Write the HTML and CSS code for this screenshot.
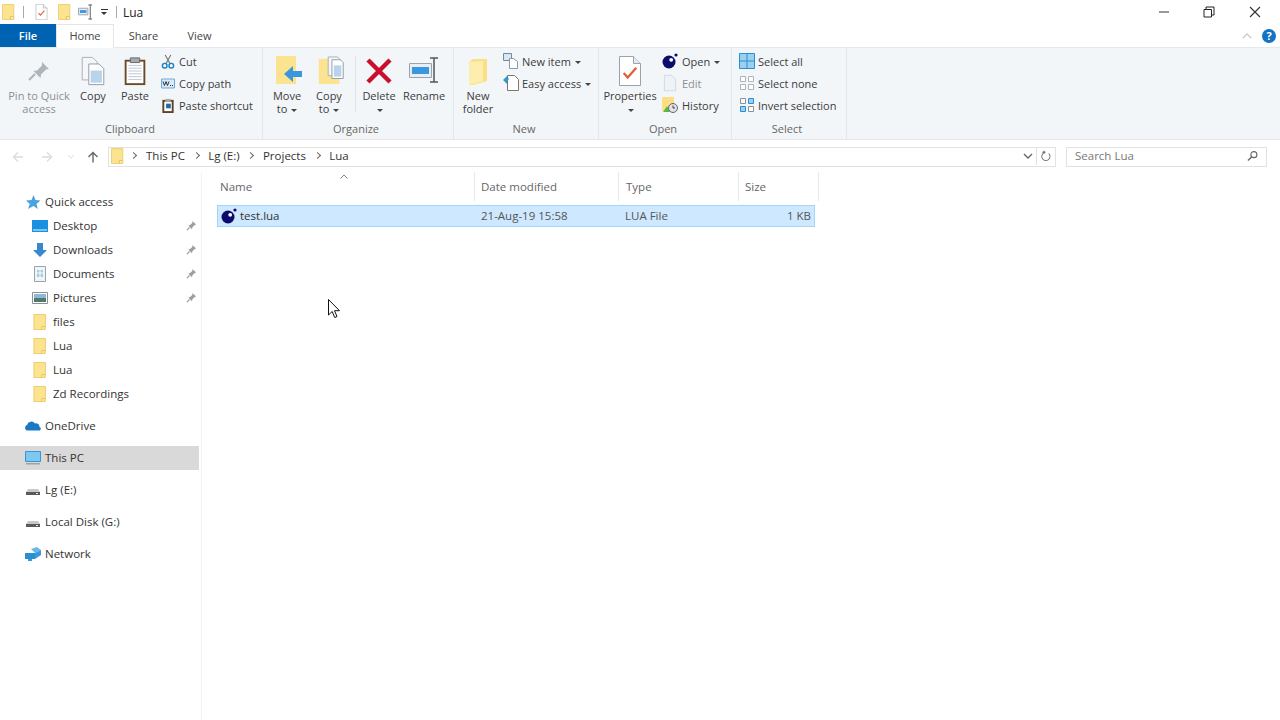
FILE: index.html
```html
<!DOCTYPE html>
<html lang="en">
<head>
<meta charset="utf-8">
<title>Lua</title>
<link rel="stylesheet" href="styles.css">
</head>
<body>
<svg class="defs" width="0" height="0">
  <defs>
    <symbol id="folder" viewBox="0 0 14 17"><path d="M.5.5h12.2v16H.5z" fill="#fbe38f" stroke="#eccd6a"/><path d="M9 16.5v-3h3.7" fill="#fff3c4" stroke="#e2be55"/></symbol>
    <symbol id="drive" viewBox="0 0 16 16"><path d="M3 7h10l2 3v3H1v-3z" fill="#c9c9c9"/><path d="M1 10h14v3H1z" fill="#5a5a5a"/><path d="M11 11h2v1h-2z" fill="#cfe"/></symbol>
    <symbol id="pin" viewBox="0 0 12 12"><path d="M7 1l4 4-1.500.5-2.500 2.500-.5 2-4-4 2-.5 2.500-2.500z" fill="#9a9fa5"/><path d="M4 8l-3 3" stroke="#9a9fa5" stroke-width="1.400"/></symbol>
    <symbol id="lua" viewBox="0 0 16 16"><circle cx="7" cy="9" r="6.500" fill="#0b0b6b"/><circle cx="9.200" cy="6.800" r="1.900" fill="#fff"/><circle cx="14" cy="2" r="1.600" fill="#0b0b6b"/></symbol>
    <symbol id="doc" viewBox="0 0 24 30"><path d="M1.500.5h14l7 7v22h-21z" fill="#fff" stroke="#9aa3ad"/><path d="M15.500.5v7h7" fill="#e6ebf0" stroke="#9aa3ad"/></symbol>
    <symbol id="check" viewBox="0 0 14 12"><path d="M1.500 6l3.500 4 7.500-8.500" fill="none" stroke="#e0603a" stroke-width="2"/></symbol>
    <symbol id="grid" viewBox="0 0 16 16"><path d="M.5.500h15v15H.5zM8 .5v15M.5 8h15" fill="#9bd0ee" stroke="#2a8fd0"/></symbol>
  </defs>
</svg>

<div class="window">
  <header class="titlebar">
    <svg class="qat-folder"><use href="#folder"/></svg>
    <span class="qat-sep"></span>
    <svg class="qat-props" viewBox="0 0 24 30"><use href="#doc"/><svg x="5" y="11" width="14" height="12" viewBox="0 0 14 12"><use href="#check"/></svg></svg>
    <svg class="qat-folder2"><use href="#folder"/></svg>
    <svg class="qat-rename" viewBox="0 0 17 17"><path d="M.5 4.500h10v7H.5z" fill="#e8eef4" stroke="#9aa3ad"/><path d="M2 6.500h7v3H2z" fill="#3a96dd"/><path d="M13 1v15M11 1h4M11 16h4" stroke="#555" fill="none"/></svg>
    <span class="qat-drop"></span>
    <span class="qat-sep qat-sep-b"></span>
    <span class="title">Lua</span>
    <div class="winctl">
      <svg class="ctl" viewBox="0 0 12 12"><path d="M1 6h10" stroke="#555" stroke-width="1.200"/></svg>
      <svg class="ctl ctl-mid" viewBox="0 0 12 12"><path d="M3 3V1h8v8H9" fill="none" stroke="#222"/><path d="M1 3.500h7.500V11H1z" fill="none" stroke="#222"/></svg>
      <svg class="ctl ctl-close" viewBox="0 0 12 12"><path d="M1 1l10 10M11 1L1 11" stroke="#333" stroke-width="1.100"/></svg>
    </div>
  </header>

  <nav class="tabs">
    <span class="tab tab-file">File</span>
    <span class="tab tab-home">Home</span>
    <span class="tab tab-share">Share</span>
    <span class="tab tab-view">View</span>
    <div class="tabs-right">
      <svg class="collapse" viewBox="0 0 12 7"><path d="M1 6l5-5 5 5" fill="none" stroke="#bbb" stroke-width="1.300"/></svg>
      <span class="help">?</span>
    </div>
  </nav>

  <section class="ribbon">
    <div class="group g-clipboard">
      <div class="group-body">
        <div class="big b-pin disabled">
          <svg class="big-icon" viewBox="0 0 24 24"><path d="M15 3l7 7-3 .5-5 5-.5 3.500-7-7 3.500-.5 5-5z" fill="#aeb4bb"/><path d="M8 15l-6 6" stroke="#aeb4bb" stroke-width="2.200"/></svg>
          <span class="big-label">Pin to Quick<br>access</span>
        </div>
        <div class="big b-copy">
          <svg class="big-icon" viewBox="0 0 26 32"><path d="M1.500 1.500h11l5 5v19h-16z" fill="#f4f6f8" stroke="#a5adb5"/><path d="M8.500 8.500h11l5 5v17h-16z" fill="#fff" stroke="#8f99a3"/><path d="M10.500 15.500h12v13h-12z" fill="#b9d3ea"/></svg>
          <span class="big-label">Copy</span>
        </div>
        <div class="big b-paste">
          <svg class="big-icon" viewBox="0 0 24 32"><path d="M1 4h22v27H1z" fill="#6b4a24"/><path d="M3 6h18v23H3z" fill="#fff"/><path d="M5 10h14M5 13h14M5 16h14M5 19h14M5 22h14M5 25h14" stroke="#b9c5d2"/><path d="M7 2h10v5H7z" fill="#a5aab0" stroke="#666"/></svg>
          <span class="big-label">Paste</span>
        </div>
        <div class="small-col c-clip">
          <div class="small"><svg class="small-icon" viewBox="0 0 14 16"><path d="M4 1l5 9M10 1L5 10" stroke="#777" stroke-width="1.200"/><circle cx="3.500" cy="12.500" r="2.500" fill="none" stroke="#1b7fc0" stroke-width="1.500"/><circle cx="10.500" cy="12.500" r="2.500" fill="none" stroke="#1b7fc0" stroke-width="1.500"/></svg><span>Cut</span></div>
          <div class="small"><svg class="small-icon" viewBox="0 0 14 10"><path d="M.5.500h13v9H.5z" fill="#d9eaf7" stroke="#6ea9d5"/><path d="M2 3l1.500 4L5 3l1.500 4L8 3M9 7h1M11 7h1" fill="none" stroke="#334"/></svg><span>Copy path</span></div>
          <div class="small"><svg class="small-icon" viewBox="0 0 14 16"><path d="M1 2h12v14H1z" fill="#5b4326"/><path d="M3 4h8v10H3z" fill="#fff"/><path d="M4 1h6v3H4z" fill="#aaa"/><path d="M5 6h5v5H5z" fill="#2468a8"/></svg><span>Paste shortcut</span></div>
        </div>
      </div>
      <div class="group-label">Clipboard</div>
    </div>

    <div class="group g-organize">
      <div class="group-body">
        <div class="big b-move">
          <svg class="big-icon" viewBox="0 0 28 30"><path d="M1 0h20v28H1z" fill="#fbe38f"/><path d="M27 15h-9v-5l-9 8 9 8v-5h9z" fill="#3a96dd"/></svg>
          <span class="big-label">Move<br>to <i class="caret"></i></span>
        </div>
        <div class="big b-copyto">
          <svg class="big-icon" viewBox="0 0 28 32"><path d="M1 3h22v27H1z" fill="#fbe38f"/><path d="M11 1h10l3 3v17H11z" fill="#f4f6f8" stroke="#a5adb5"/><path d="M15 4h9l3 3v17H15z" fill="#fff" stroke="#8f99a3"/><path d="M17 10h8v12h-8z" fill="#b9d3ea"/></svg>
          <span class="big-label">Copy<br>to <i class="caret"></i></span>
        </div>
        <span class="vrule"></span>
        <div class="big b-delete">
          <svg class="big-icon" viewBox="0 0 26 26"><path d="M2 2l22 22M24 2L2 24" stroke="#c8102e" stroke-width="4.500"/></svg>
          <span class="big-label">Delete<br><i class="caret"></i></span>
        </div>
        <div class="big b-rename">
          <svg class="big-icon" viewBox="0 0 30 28"><path d="M.5 7.500h22v14H.5z" fill="#e8eef4" stroke="#9aa3ad"/><path d="M3 11h17v7H3z" fill="#3a96dd"/><path d="M25 2v24M21 2h8M21 26h8" stroke="#555" stroke-width="1.500" fill="none"/></svg>
          <span class="big-label">Rename</span>
        </div>
      </div>
      <div class="group-label">Organize</div>
    </div>

    <div class="group g-new">
      <div class="group-body">
        <div class="big b-newfolder">
          <svg class="big-icon" viewBox="0 0 20 28"><path d="M1 4l4-3h14v22L5 27H1z" fill="#fbdf82"/><path d="M1 4l14-1v20L1 27z" fill="#fdeeb0"/></svg>
          <span class="big-label">New<br>folder</span>
        </div>
        <div class="small-col c-new">
          <div class="small"><svg class="small-icon" viewBox="0 0 16 16"><path d="M.5.500h8v7h-8z" fill="#dbe6f0" stroke="#6c8ba5"/><path d="M6.500 5.500h4l4 3v7h-8z" fill="#fff" stroke="#8f99a3"/></svg><span>New item <i class="caret"></i></span></div>
          <div class="small"><svg class="small-icon" viewBox="0 0 16 16"><path d="M4.500.5h7l4 4v11h-11z" fill="#fff" stroke="#777"/><path d="M0 5l4-4 2 3-2 2v3z" fill="#39c"/></svg><span>Easy access <i class="caret"></i></span></div>
        </div>
      </div>
      <div class="group-label">New</div>
    </div>

    <div class="group g-open">
      <div class="group-body">
        <div class="big b-props">
          <svg class="big-icon" viewBox="0 0 24 30"><use href="#doc"/><svg x="4" y="10" width="16" height="14" viewBox="0 0 14 12"><use href="#check"/></svg></svg>
          <span class="big-label">Properties<br><i class="caret"></i></span>
        </div>
        <div class="small-col c-open">
          <div class="small"><svg class="small-icon" viewBox="0 0 16 16"><use href="#lua"/></svg><span>Open <i class="caret"></i></span></div>
          <div class="small disabled"><svg class="small-icon" viewBox="0 0 24 30"><path d="M1.500.5h14l7 7v22h-21z" fill="#eef3f8" stroke="#b8c6d6"/></svg><span>Edit</span></div>
          <div class="small"><svg class="small-icon" viewBox="0 0 16 16"><path d="M0 0h12v14H0z" fill="#fbdf82"/><path d="M1 15l4-6 3 6z" fill="#5ab848"/><circle cx="11" cy="11" r="4.500" fill="#dfe3e6" stroke="#666"/><path d="M11 8.500V11h2" fill="none" stroke="#444"/></svg><span>History</span></div>
        </div>
      </div>
      <div class="group-label">Open</div>
    </div>

    <div class="group g-select">
      <div class="group-body">
        <div class="small-col c-select">
          <div class="small"><svg class="small-icon" viewBox="0 0 16 16"><use href="#grid"/></svg><span>Select all</span></div>
          <div class="small"><svg class="small-icon" viewBox="0 0 16 16"><path d="M1.500 1.500h5v5h-5zM9.500 1.500h5v5h-5zM1.500 9.500h5v5h-5zM9.500 9.500h5v5h-5z" fill="#fff" stroke="#aeb4bb"/></svg><span>Select none</span></div>
          <div class="small"><svg class="small-icon" viewBox="0 0 16 16"><path d="M1.500 9.500h5v5h-5zM9.500 1.500h5v5h-5z" fill="#9bd0ee" stroke="#2a8fd0"/><path d="M1.500 1.500h5v5h-5zM9.500 9.500h5v5h-5z" fill="#fff" stroke="#8a9199"/></svg><span>Invert selection</span></div>
        </div>
      </div>
      <div class="group-label">Select</div>
    </div>
  </section>

  <div class="addressrow">
    <svg class="nav-arrow na-back" viewBox="0 0 12 12"><path d="M11 6H1.500M6 1.500L1.500 6 6 10.500" fill="none" stroke="#dcdcdc" stroke-width="1.300"/></svg>
    <svg class="nav-arrow na-fwd" viewBox="0 0 12 12"><path d="M1 6h9.500M6 1.500L10.500 6 6 10.500" fill="none" stroke="#dcdcdc" stroke-width="1.300"/></svg>
    <svg class="nav-chev" viewBox="0 0 8 5"><path d="M1 1l3 3 3-3" fill="none" stroke="#dcdcdc"/></svg>
    <svg class="nav-arrow na-up" viewBox="0 0 12 12"><path d="M6 11.500V1.500M1.500 6L6 1.500 10.500 6" fill="none" stroke="#666" stroke-width="1.400"/></svg>
    <div class="address">
      <svg class="addr-folder"><use href="#folder"/></svg>
      <span class="crumb-sep first"></span><span class="crumb">This PC</span>
      <span class="crumb-sep"></span><span class="crumb">Lg (E:)</span>
      <span class="crumb-sep"></span><span class="crumb">Projects</span>
      <span class="crumb-sep"></span><span class="crumb">Lua</span>
      <svg class="addr-chev" viewBox="0 0 10 6"><path d="M1 1l4 4 4-4" fill="none" stroke="#666" stroke-width="1.400"/></svg>
      <div class="refresh"><svg viewBox="0 0 12 12" class="refresh-icon"><path d="M9.500 3.200A4.500 4.500 0 1 1 6 2H3.500M5 .5L3 2l2 1.500" fill="none" stroke="#777" stroke-width="1.100"/></svg></div>
    </div>
    <div class="search">
      <span>Search Lua</span>
      <svg class="search-icon" viewBox="0 0 12 12"><circle cx="7.500" cy="4.500" r="3.300" fill="none" stroke="#666" stroke-width="1.200"/><path d="M5 7l-4 4" stroke="#666" stroke-width="1.500"/></svg>
    </div>
  </div>

  <main class="main">
    <aside class="sidebar">
      <div class="side-group">
        <div class="row top"><svg class="ico" viewBox="0 0 16 16"><path d="M8.500 1l2 5 5 .5-4 3.500 1.300 5-4.300-3-5.500 3 1.800-5L1 6.500 6.500 6z" fill="#4aa3dc"/></svg><span>Quick access</span></div>
        <div class="row sub"><svg class="ico" viewBox="0 0 16 14"><path d="M0 1h16v12H0z" fill="#1b8fe0"/><path d="M1 10h14v2H1z" fill="#7cc4f2"/></svg><span>Desktop</span><svg class="pin"><use href="#pin"/></svg></div>
        <div class="row sub"><svg class="ico" viewBox="0 0 16 16"><path d="M5 1h6v7h4l-7 7-7-7h4z" fill="#3a87cf"/></svg><span>Downloads</span><svg class="pin"><use href="#pin"/></svg></div>
        <div class="row sub"><svg class="ico" viewBox="0 0 16 16"><path d="M2.500.5h11v15h-11z" fill="#f2f4f6" stroke="#9aa3ad"/><path d="M5 4h6v7H5z" fill="#9ed0dd"/><path d="M8 3v9M5 7h6" stroke="#fff"/></svg><span>Documents</span><svg class="pin"><use href="#pin"/></svg></div>
        <div class="row sub"><svg class="ico" viewBox="0 0 16 12"><path d="M.5.500h15v11H.5z" fill="#fff" stroke="#8a9199"/><path d="M2 2h12v4H2z" fill="#8fb8d8"/><path d="M2 6h12v4H2z" fill="#4d7a6a"/></svg><span>Pictures</span><svg class="pin"><use href="#pin"/></svg></div>
        <div class="row sub"><svg class="ico-folder"><use href="#folder"/></svg><span>files</span></div>
        <div class="row sub"><svg class="ico-folder"><use href="#folder"/></svg><span>Lua</span></div>
        <div class="row sub"><svg class="ico-folder"><use href="#folder"/></svg><span>Lua</span></div>
        <div class="row sub"><svg class="ico-folder"><use href="#folder"/></svg><span>Zd Recordings</span></div>
      </div>
      <div class="side-group">
        <div class="row top"><svg class="ico" viewBox="0 0 16 10"><path d="M1 9a3 3 0 0 1 1-5 4.500 4.500 0 0 1 8-1.500A3.500 3.500 0 0 1 14.500 6 2 2 0 0 1 15 9.500H2z" fill="#1b78c4"/></svg><span>OneDrive</span></div>
      </div>
      <div class="side-group">
        <div class="row top selected"><svg class="ico" viewBox="0 0 16 14"><path d="M.5.500h15v10H.5z" fill="#7cc8f2" stroke="#3f93c9"/><path d="M1 12h14v1.500H1z" fill="#9aa3ad"/></svg><span>This PC</span></div>
      </div>
      <div class="side-group">
        <div class="row top"><svg class="ico"><use href="#drive"/></svg><span>Lg (E:)</span></div>
      </div>
      <div class="side-group">
        <div class="row top"><svg class="ico"><use href="#drive"/></svg><span>Local Disk (G:)</span></div>
      </div>
      <div class="side-group">
        <div class="row top"><svg class="ico" viewBox="0 0 16 16"><path d="M0 7h10v6H0z" fill="#2a8fd0"/><path d="M6 3l6-2 4 3-6 3z" fill="#69b8e8"/><path d="M10 7l6-3v5l-6 4zM3 13h4v2H3z" fill="#3a96dd"/></svg><span>Network</span></div>
      </div>
    </aside>

    <section class="files">
      <svg class="sort" viewBox="0 0 8 5"><path d="M.5 4.500L4 1l3.500 3.500" fill="none" stroke="#888"/></svg>
      <div class="file-head">
        <span class="col col-name">Name</span>
        <span class="col col-date">Date modified</span>
        <span class="col col-type">Type</span>
        <span class="col col-size">Size</span>
      </div>
      <div class="file-row">
        <span class="cell cell-name"><svg class="file-icon"><use href="#lua"/></svg><span class="fname">test.lua</span></span>
        <span class="cell cell-date">21-Aug-19 15:58</span>
        <span class="cell cell-type">LUA File</span>
        <span class="cell cell-size">1 KB</span>
      </div>
    </section>
  </main>
  <svg class="cursor" viewBox="0 0 13 20"><path d="M.5.500v15.500l3.700-3.500 2.500 6 2.300-1-2.500-5.800h5z" fill="#fff" stroke="#111"/></svg>
</div>
</body>
</html>
```

FILE: styles.css
```css
* { box-sizing: border-box; }
html, body { margin: 0; padding: 0; height: 100%; }
body { font-family: "Open Sans", "Noto Sans", sans-serif; font-size: 11.5px; color: #333; background: #fff; overflow: hidden; }
.defs { position: absolute; }
svg { display: block; flex: none; overflow: visible; }
.window { width: 1280px; height: 720px; display: flex; flex-direction: column; position: relative; }

/* title bar */
.titlebar { height: 24px; display: flex; align-items: center; flex: none; }
.qat-folder { width: 13px; height: 16px; margin-left: 2px; }
.qat-sep { width: 1px; height: 12px; background: #aaa; margin-left: 8px; }
.qat-props { width: 13px; height: 16px; margin-left: 11px; }
.qat-folder2 { width: 13px; height: 16px; margin-left: 10px; }
.qat-rename { width: 16px; height: 16px; margin-left: 7px; }
.qat-drop { width: 7px; height: 6px; margin-left: 7px; border-top: 1px solid #333; position: relative; }
.qat-drop::after { content: ""; display: block; margin-top: 2px; width: 0; height: 0; border: 3.500px solid transparent; border-top: 3.500px solid #333; border-bottom: 0; }
.qat-sep-b { margin-left: 8px; }
.title { margin-left: 6px; color: #222; font-size: 12px; }
.winctl { margin-left: auto; display: flex; align-items: center; padding-right: 19px; }
.ctl { width: 12px; height: 12px; }
.ctl-mid { margin-left: 33px; }
.ctl-close { margin-left: 34px; }

/* tabs */
.tabs { height: 24px; display: flex; flex: none; position: relative; z-index: 1; font-size: 11px; }
.tab { display: flex; align-items: center; justify-content: center; color: #444; height: 23px; padding-bottom: 1px; }
.tab-file { width: 56px; background: #0063b1; color: #fff; font-weight: 600; }
.tab-home { width: 58px; height: 24px; padding-bottom: 2px; background: #fff; border: 1px solid #e3e5e8; border-bottom: 0; }
.tab-share { width: 59px; }
.tab-view { width: 53px; }
.tabs-right { margin-left: auto; display: flex; align-items: center; padding-right: 4px; height: 23px; }
.collapse { width: 10px; height: 6px; }
.help { width: 14px; height: 14px; margin-left: 10px; border-radius: 50%; background: #1272c4; color: #fff; font-size: 11px; font-weight: 700; display: flex; align-items: center; justify-content: center; }

/* ribbon */
.ribbon { height: 93px; background: #f3f6f9; border-top: 1px solid #e6e8eb; border-bottom: 1px solid #e3e5e8; display: flex; flex: none; margin-top: -1px; font-size: 11px; color: #3c3c3c; }
.group { display: flex; flex-direction: column; border-right: 1px solid #e3e6ea; }
.group-body { flex: 1; display: flex; position: relative; }
.group-label { height: 20px; text-align: center; color: #666; line-height: 20px; padding-right: 4px; }
.g-clipboard { width: 263px; }
.g-organize { width: 191px; }
.g-new { width: 145px; }
.g-open { width: 133px; }
.g-select { width: 115px; }
.g-clipboard .group-label { padding-right: 2px; }
.big { display: flex; flex-direction: column; align-items: center; text-align: center; flex: none; line-height: 13px; }
.big-icon { height: 30px; margin-top: 8px; margin-bottom: 3px; }
.big-label { display: block; }
.disabled, .disabled span { color: #8b8f94; }
.caret { display: inline-block; width: 0; height: 0; border: 3px solid transparent; border-top: 3.500px solid #444; border-bottom: 0; vertical-align: middle; margin-left: 1px; font-style: normal; }
.b-pin { width: 78px; }
.b-pin .big-icon { width: 24px; }
.b-copy { width: 30px; }
.b-copy .big-icon { width: 26px; }
.b-paste { width: 38px; margin-left: 8px; }
.b-paste .big-icon { width: 24px; }
.c-clip { margin-left: 7px; }
.small-col { display: flex; flex-direction: column; padding-top: 2px; }
.small { height: 22px; display: flex; align-items: center; white-space: nowrap; }
.small-icon { width: 14px; height: 15px; margin-right: 4px; }
.c-select .small-icon, .c-open .small-icon { width: 16px; height: 16px; margin-right: 3px; }
.c-open .small-icon { margin-right: 4px; }
.c-new .small-icon { width: 16px; height: 16px; margin-right: 3px; }
.b-move { width: 42px; margin-left: 3px; }
.b-move .big-icon { width: 28px; margin-left: 4px; }
.b-copyto { width: 42px; }
.b-copyto .big-icon { width: 28px; margin-left: 4px; }
.vrule { width: 1px; height: 56px; background: #dfe2e6; margin: 8px 0 0 5px; flex: none; }
.b-delete { width: 46px; }
.b-delete .big-icon { width: 26px; height: 26px; margin-top: 10px; margin-bottom: 5px; }
.b-rename { width: 44px; }
.b-rename .big-icon { width: 30px; height: 28px; margin-bottom: 5px; }
.b-newfolder { width: 44px; margin-left: 2px; }
.b-newfolder .big-icon { width: 20px; height: 28px; margin-top: 10px; margin-bottom: 3px; }
.c-new { margin-left: 3px; }
.b-props { width: 60px; margin-left: 1px; }
.b-props .big-icon { width: 24px; }
.c-open { margin-left: 2px; }
.c-select { margin-left: 7px; }

/* address */
.addressrow { height: 32px; display: flex; align-items: center; flex: none; padding-top: 1px; }
.nav-arrow { width: 12px; height: 12px; }
.na-back { margin-left: 12px; }
.na-fwd { margin-left: 17px; }
.nav-chev { width: 8px; height: 5px; margin-left: 14px; }
.na-up { margin-left: 12px; }
.address { width: 948px; height: 20px; margin-left: 9px; border: 1px solid #e2e2e2; display: flex; align-items: center; color: #333; font-size: 11.5px; padding-bottom: 2px; }
.addr-folder { width: 13px; height: 16px; margin-left: 2px; }
.crumb-sep { width: 5px; height: 5px; border-top: 1px solid #666; border-right: 1px solid #666; transform: rotate(45deg); margin: 0 9.500px 0 8.800px; flex: none; }
.crumb-sep.first { margin-left: 7px; margin-right: 10px; }
.addr-chev { width: 10px; height: 6px; margin-left: auto; }
.refresh { width: 19px; height: 18px; border-left: 1px solid #e2e2e2; margin-left: 3px; display: flex; align-items: center; justify-content: center; padding-right: 2px; }
.refresh-icon { width: 11px; height: 12px; }
.search { width: 201px; height: 20px; margin-left: 10px; border: 1px solid #e2e2e2; display: flex; align-items: center; justify-content: space-between; padding: 0 8px 2px; color: #777; font-size: 11.5px; }
.search-icon { width: 11px; height: 12px; }

/* main */
.main { flex: 1; display: flex; min-height: 0; }
.sidebar { width: 202px; flex: none; padding-top: 18px; border-right: 1px solid #f3f3f3; padding-right: 2px; }
.side-group { margin-bottom: 8px; }
.row { height: 24px; display: flex; align-items: center; color: #333; padding-bottom: 1px; }
.row.top { padding-left: 25px; }
.row.top span { margin-left: 4px; }
.row.sub { padding-left: 32px; }
.row.sub span { margin-left: 5px; }
.row .ico { width: 16px; height: 16px; }
.row.sub .ico-folder { width: 14px; height: 16px; margin-left: 1px; margin-right: 1px; }
.row.sub .ico-folder + span { margin-left: 5px; }
.row.selected { background: #d9d9d9; }
.row .pin { width: 11px; height: 11px; margin-left: auto; margin-right: 2px; }

.files { flex: 1; position: relative; padding-left: 15px; }
.sort { position: absolute; left: 138px; top: 2px; width: 8px; height: 5px; }
.file-head { display: flex; height: 33px; color: #666; width: 602px; }
.col { display: flex; align-items: center; padding-left: 6px; border-right: 1px solid #e8e8e8; height: 29px; }
.col-name { width: 258px; padding-left: 3px; }
.col-date { width: 144px; }
.col-type { width: 120px; padding-left: 7px; }
.col-size { width: 80px; padding-left: 6px; }
.file-row { display: flex; width: 598px; height: 22px; background: #cde8ff; border: 1px solid #a5d5f6; align-items: center; color: #555; padding-bottom: 1px; }
.cell { display: flex; align-items: center; height: 100%; }
.cell-name { width: 263px; padding-left: 3px; color: #333; }
.cell-date { width: 144px; }
.cell-type { width: 120px; }
.cell-size { flex: 1; justify-content: flex-end; padding-right: 3px; }
.file-icon { width: 16px; height: 16px; }
.fname { margin-left: 3px; }
.cursor { position: absolute; left: 328px; top: 299px; width: 13px; height: 20px; }
```
